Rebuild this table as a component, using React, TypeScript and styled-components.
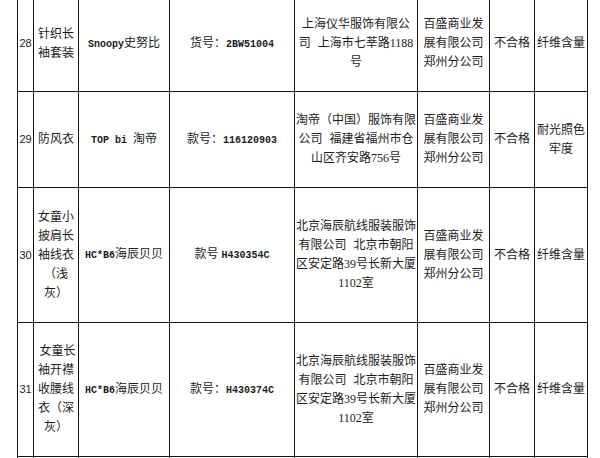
import styled, { createGlobalStyle } from "styled-components";
import React from "react";

const Global = createGlobalStyle`
    html, body {
        margin: 0;
        padding: 0;
        background: #ffffff;
        overflow: hidden;
    }
    body {
        font-family: "Liberation Serif", "Noto Sans CJK SC", serif;
        color: #1c1c1c;
    }
`
const Sheet = styled.table`
    border-collapse: collapse;
    table-layout: fixed;
    width: 571px;
    margin: -5px 0 0 17px;
`
const Row = styled.tr<{ h: number }>`
    height: ${({ h }) => h}px;
`
const Cell = styled.td`
    border: 1px solid #141414;
    padding: 0;
    text-align: center;
    vertical-align: middle;
    font-size: 12px;
    line-height: 19px;
    overflow: hidden;
    white-space: nowrap;
`
const Num = styled(Cell)`
    font-family: "Liberation Sans", sans-serif;
    font-size: 11px;
`
const Code = styled.span`
    font-family: "Liberation Mono", monospace;
    font-size: 10px;
    font-weight: bold;
`
// a wider gap between company name and address, as in the source sheet
const Gap = styled.span`
    display: inline-block;
    width: 7px;
`

interface iRow {
    no: string;
    name: React.ReactNode;
    brand: React.ReactNode;
    model: React.ReactNode;
    maker: React.ReactNode;
    seller: React.ReactNode;
    result: string;
    item: React.ReactNode;
    h: number;
}

const seller = <>百盛商业发<br />展有限公司<br />郑州分公司</>

const haichen = <>北京海辰航线服装服饰<br />有限公司<Gap />北京市朝阳<br />区安定路39号长新大厦<br />1102室</>

const rows: iRow[] = [
    {
        no: "28",
        name: <>针织长<br />袖套装</>,
        brand: <><Code>Snoopy</Code>史努比</>,
        model: <>货号：<Code>2BW51004</Code></>,
        maker: <>上海仪华服饰有限公<br />司<Gap />上海市七莘路1188<br />号</>,
        seller,
        result: "不合格",
        item: "纤维含量",
        h: 96,
    },
    {
        no: "29",
        name: "防风衣",
        brand: <><Code>TOP bi </Code>淘帝</>,
        model: <>款号：<Code>116120903</Code></>,
        maker: <>淘帝（中国）服饰有限<br />公司<Gap />福建省福州市仓<br />山区齐安路756号</>,
        seller,
        result: "不合格",
        item: <>耐光照色<br />牢度</>,
        h: 96,
    },
    {
        no: "30",
        name: <>女童小<br />披肩长<br />袖线衣<br />（浅<br />灰）</>,
        brand: <><Code>HC*B6</Code>海辰贝贝</>,
        model: <>款号 <Code>H430354C</Code></>,
        maker: haichen,
        seller,
        result: "不合格",
        item: "纤维含量",
        h: 135,
    },
    {
        no: "31",
        name: <>&nbsp;女童长<br />袖开襟<br />收腰线<br />衣（深<br />灰）</>,
        brand: <><Code>HC*B6</Code>海辰贝贝</>,
        model: <>款号：<Code>H430374C</Code></>,
        maker: haichen,
        seller,
        result: "不合格",
        item: "纤维含量",
        h: 134,
    },
]

const widths = [16, 45, 91, 125, 123, 72, 45, 53]

const App = () => {
    return (
        <>
            <Global />
            <Sheet>
                <colgroup>
                    {widths.map((w, i) => (
                        <col key={i} style={{ width: w }} />
                    ))}
                </colgroup>
                <tbody>
                    {rows.map((r) => (
                        <Row key={r.no} h={r.h}>
                            <Num>{r.no}</Num>
                            <Cell>{r.name}</Cell>
                            <Cell>{r.brand}</Cell>
                            <Cell>{r.model}</Cell>
                            <Cell>{r.maker}</Cell>
                            <Cell>{r.seller}</Cell>
                            <Cell>{r.result}</Cell>
                            <Cell>{r.item}</Cell>
                        </Row>
                    ))}
                    <Row h={120}>
                        {widths.map((_, i) => (
                            <Cell key={i} />
                        ))}
                    </Row>
                </tbody>
            </Sheet>
        </>
    )
}

export default App;
